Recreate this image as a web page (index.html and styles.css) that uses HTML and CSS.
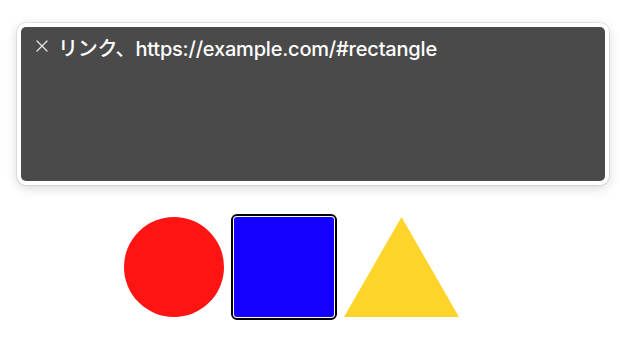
FILE: index.html
```html
<!DOCTYPE html>
<html lang="ja">
<head>
<meta charset="utf-8">
<title>Link preview</title>
<link rel="stylesheet" href="styles.css">
</head>
<body>
<div class="popup">
  <div class="popup-inner">
    <svg class="close" width="12" height="12" viewBox="0 0 12 12" aria-hidden="true">
      <path d="M1 1 L11 11 M11 1 L1 11" stroke="#e6e6e6" stroke-width="1.3" stroke-linecap="round" fill="none"/>
    </svg>
    <span class="label">リンク、https://example.com/#rectangle</span>
  </div>
</div>
<div class="shapes">
  <div class="circle"></div>
  <div class="square"></div>
  <svg class="triangle" width="115" height="100" viewBox="0 0 115 100" aria-hidden="true">
    <polygon points="57.5,0 115,100 0,100" fill="#ffd42a"/>
  </svg>
</div>
</body>
</html>
```

FILE: styles.css
```css
html, body {
  margin: 0;
  padding: 0;
  background: #ffffff;
}

body {
  font-family: Inter, "Noto Sans CJK JP", sans-serif;
}

.popup {
  margin: 23px 0 0 17px;
  width: 592px;
  height: 162px;
  box-sizing: border-box;
  border: 4px solid #ffffff;
  border-radius: 9px;
  background: #ffffff;
  box-shadow: 0 0 0 1px rgba(0, 0, 0, 0.08), 0 3px 12px rgba(0, 0, 0, 0.16);
}

.popup-inner {
  height: 100%;
  box-sizing: border-box;
  background: #4a4a4a;
  border-radius: 5px;
  padding: 10px 15px 0 15px;
  display: flex;
  align-items: flex-start;
  gap: 10px;
}

.close {
  flex: none;
  margin-top: 3px;
}

.label {
  color: #ffffff;
  font-size: 20px;
  font-weight: 500;
  line-height: 24px;
  letter-spacing: -0.2px;
  white-space: nowrap;
}

.shapes {
  display: flex;
  align-items: flex-start;
  gap: 10px;
  margin-top: 32px;
  padding: 0 0 31px 124px;
}

.circle {
  width: 100px;
  height: 100px;
  border-radius: 50%;
  background: #ff1414;
}

.square {
  width: 100px;
  height: 100px;
  background: #1400ff;
  border-radius: 3px;
  box-shadow: 0 0 0 1px #ffffff;
  outline: 2px solid #000000;
  outline-offset: 1px;
}

.triangle {
  display: block;
}
```
